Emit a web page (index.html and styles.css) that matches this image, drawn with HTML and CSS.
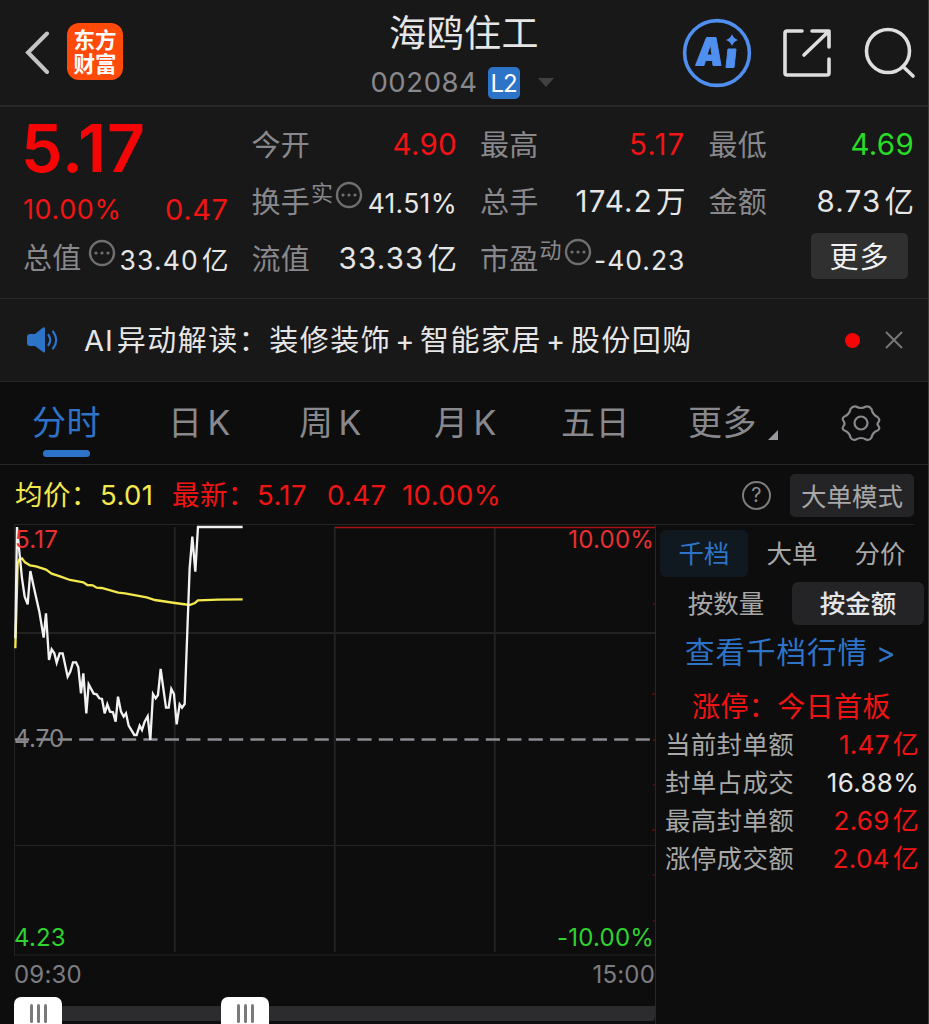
FILE: index.html
```
<!DOCTYPE html>
<html lang="zh-CN">
<head>
    <meta charset="UTF-8">
    <meta name="viewport" content="width=device-width, initial-scale=1.0">
    <title>海鸥住工 002084</title>
    <link rel="stylesheet" href="styles.css">
</head>
<body>
    <header class="header">
        <div class="header-left">
            <svg class="back" width="26" height="44" viewBox="0 0 26 44"><path d="M22 2.500 3 21.500 22 41"/></svg>
            <div class="logo"><span>东方</span><span>财富</span></div>
        </div>
        <div class="header-title">
            <h1>海鸥住工</h1>
            <div class="code"><span class="code-num">002084</span><span class="l2">L2</span><i class="caret"></i></div>
        </div>
        <div class="header-right">
            <svg width="70" height="70" viewBox="0 0 70 70">
                <circle cx="35" cy="35" r="32.4" fill="none" stroke="#4f8ff0" stroke-width="3.6"/>
                <path fill="#4f8ff0" stroke="#4f8ff0" stroke-linejoin="round" fill-rule="evenodd" d="M24.500 19.500H34L39 47.500H31L30.500 42.500H23.500L22 47.500H13.500ZM28.500 26.500 25 37H30Z"/>
                <path fill="#4f8ff0" stroke="#4f8ff0" stroke-linejoin="round" d="M46 31H54L52 49.500H44Z"/>
                <path fill="#4f8ff0" d="M50 16Q51.500 20.500 56 22Q51.500 23.500 50 28Q48.500 23.500 44 22Q48.500 20.500 50 16Z"/>
            </svg>
            <svg class="line-icon share" width="50" height="50" viewBox="0 0 50 50"><path d="M20 3H5Q3 3 3 5V45Q3 47 5 47H45Q47 47 47 45V31M30 3H47V19M46 4 22 27"/></svg>
            <svg class="line-icon" width="52" height="52" viewBox="0 0 52 52"><circle cx="24" cy="24" r="21.500"/><path d="M39 39.500 49 49"/></svg>
        </div>
    </header>

    <section class="quote">
        <div class="col">
            <div class="price">5.17</div>
            <div class="row change red"><span>10.00%</span><span class="diff">0.47</span></div>
            <div class="row last"><span class="label">总值</span><svg class="dots dots-gap" width="28" height="28" viewBox="0 0 28 28"><circle cx="14" cy="14" r="12"/><path d="M8 14h.01M14 14h.01M20 14h.01"/></svg><span class="val small wide">33.40<b>亿</b></span></div>
        </div>
        <div class="col">
            <div class="row"><span class="label">今开</span><span class="val red">4.90</span></div>
            <div class="row"><span class="label">换手</span><sup>实</sup><svg class="dots" width="28" height="28" viewBox="0 0 28 28"><circle cx="14" cy="14" r="12"/><path d="M8 14h.01M14 14h.01M20 14h.01"/></svg><span class="val small">41.51%</span></div>
            <div class="row"><span class="label">流值</span><span class="val wide">33.33<b>亿</b></span></div>
        </div>
        <div class="col">
            <div class="row"><span class="label">最高</span><span class="val wide red">5.17</span></div>
            <div class="row"><span class="label">总手</span><span class="val wide">174.2<b>万</b></span></div>
            <div class="row"><span class="label">市盈</span><sup>动</sup><svg class="dots" width="28" height="28" viewBox="0 0 28 28"><circle cx="14" cy="14" r="12"/><path d="M8 14h.01M14 14h.01M20 14h.01"/></svg><span class="val small pe">-40.23</span></div>
        </div>
        <div class="col">
            <div class="row"><span class="label">最低</span><span class="val green">4.69</span></div>
            <div class="row"><span class="label">金额</span><span class="val wide">8.73<b>亿</b></span></div>
            <button class="more">更多</button>
        </div>
    </section>

    <section class="news">
        <svg width="32" height="28" viewBox="0 0 32 28">
            <path fill="#2d74c8" d="M3 8H8L16 1.500Q18 .5 18 3V25Q18 27.500 16 26L8 20H3Q0 20 0 17V11Q0 8 3 8Z"/>
            <path fill="none" stroke="#2d74c8" stroke-width="2.200" stroke-linecap="round" d="M21.500 9Q25 14 21.500 19M26 5.500Q32.500 14 26 22.500"/>
        </svg>
        <p>AI<span class="news-body">异动解读：装修装饰<i>+</i>智能家居<i>+</i>股份回购</span></p>
        <span class="news-dot"></span>
        <svg class="close" width="20" height="20" viewBox="0 0 20 20"><path d="M2 2 18 18M18 2 2 18"/></svg>
    </section>

    <nav class="tabs">
        <a class="active">分时</a>
        <a>日<span>K</span></a>
        <a>周<span>K</span></a>
        <a>月<span>K</span></a>
        <a>五日</a>
        <a>更多<i class="corner"></i></a>
        <svg width="40" height="38" viewBox="0 0 40 38">
            <path d="M15 2.500Q20 5.500 25 2.500Q28.500 2 30.500 5Q31.500 10.500 36.500 13Q39.500 15.500 37.500 18Q35.500 20 37.500 22Q39.500 25 36.500 26.500Q31.500 28.500 30.500 33.500Q28.500 37 25 35.500Q20 32.500 15 35.500Q11.500 37 9.500 33.500Q8.500 28.500 3.500 26.500Q.5 25 2.500 22Q4.500 20 2.500 17Q.5 14 3.500 12.500Q8.500 10.500 9.500 5Q11.500 2 15 2.500Z"/>
            <circle cx="20" cy="19" r="6.500"/>
        </svg>
    </nav>

    <div class="info">
        <span class="yellow info-name">均价：</span><span class="yellow info-avg">5.01</span>
        <span class="red info-name">最新：</span><span class="red info-num">5.17</span><span class="red info-diff">0.47</span><span class="red">10.00%</span>
        <span class="help">?</span>
        <button class="mode">大单模式</button>
    </div>

    <main class="main">
        <div class="chart">
            <svg class="plot" width="642" height="432" viewBox="14 524 642 432">
                <g class="grid">
                    <path d="M14.500 524V956M14 955H655M15 845.500H655"/>
                    <path stroke-width="2" d="M174.800 527V952M334.800 527V952M494.800 527V952M15 633H655"/>
                </g>
                <path stroke="#a81414" stroke-width="1.500" d="M335 527.500H655"/>
                <path stroke="#7a1515" d="M653 604h2M652 694h3M653 740h2M653 785h2M652 830h3M653 875h2M653 921h2"/>
                <path class="prev-close" d="M15 739.500H655"/>
                <g class="lines" transform="translate(0 515) scale(.3333)">
                    <polyline stroke="#f3e84e" points="46,400 53,145 58,133 66,130 75,142 90,151 108,154 138,164 155,176 180,184 210,195 250,202 262,210 278,211 290,218 305,219 355,233 375,235 440,247 465,255 525,264 569,270 585,264 594,256 655,254 728,253"/>
                    <polyline stroke="#f2f2f2" points="46,370 51,36 58,110 66,190 74,245 83,268 91,168 104,228 118,290 131,368 138,295 147,435 155,403 163,415 170,443 179,415 188,415 203,485 211,470 219,442 228,442 235,457 243,535 250,475 259,595 266,508 281,536 290,538 298,550 306,552 314,595 322,568 330,590 339,592 347,620 354,545 363,590 371,605 378,595 386,632 403,660 410,660 419,632 426,645 434,620 443,604 451,675 459,537 467,550 474,540 482,462 498,578 506,578 514,522 522,537 530,628 539,568 546,578 554,567 562,350 569,160 577,65 586,170 594,36 728,36"/>
                </g>
                <g class="axis">
                    <text x="15" y="548" fill="#e83030">5.17</text>
                    <text x="654" y="548" fill="#e83030" text-anchor="end">10.00%</text>
                    <text x="14" y="747" fill="#86868b">4.70</text>
                    <text x="14" y="946" fill="#2fd22f">4.23</text>
                    <text x="654" y="946" fill="#2fd22f" text-anchor="end">-10.00%</text>
                </g>
            </svg>
            <div class="times"><span>09:30</span><span>15:00</span></div>
            <div class="slider">
                <span class="handle"><i></i><i></i><i></i></span>
                <span class="handle"><i></i><i></i><i></i></span>
            </div>
        </div>
        <aside class="side">
            <div class="side-tabs"><a class="on">千档</a><a>大单</a><a>分价</a></div>
            <div class="side-mode"><a>按数量</a><a class="on">按金额</a></div>
            <a class="side-link">查看千档行情<span>&gt;</span></a>
            <p class="side-title">涨停：今日首板</p>
            <dl>
                <div><dt>当前封单额</dt><dd class="red">1.47<b>亿</b></dd></div>
                <div><dt>封单占成交</dt><dd>16.88%</dd></div>
                <div><dt>最高封单额</dt><dd class="red">2.69<b>亿</b></dd></div>
                <div><dt>涨停成交额</dt><dd class="red">2.04<b>亿</b></dd></div>
            </dl>
        </aside>
    </main>
</body>
</html>
```
FILE: styles.css
```
* {
    box-sizing: border-box;
}
body {
    margin: 0;
    height: 1024px;
    overflow: hidden;
    background: #0d0d0d;
    border-right: 1px solid #3c3c3c;
    color: #e6e6e6;
    font-family: Inter, "Noto Sans CJK SC", sans-serif;
    font-weight: 400;
    line-height: 1.2;
    display: flex;
    flex-direction: column;
}
h1, p, dl, dd {
    margin: 0;
}
i, b {
    font-style: normal;
    font-weight: inherit;
}
button {
    border: 0;
    padding: 0;
    font-family: inherit;
}
.red { color: #f01414; }
.green { color: #26dc26; }
.yellow { color: #f3e84e; }

/* header */
.header {
    height: 107px;
    flex: none;
    display: grid;
    grid-template-columns: 1fr auto 1fr;
    background: #181818;
    border-bottom: 2px solid #282828;
}
.header-left {
    display: flex;
    align-items: center;
    padding-left: 25px;
}
.back {
    fill: none;
    stroke: #c4c4c4;
    stroke-width: 4;
    stroke-linecap: round;
}
.logo {
    width: 56px;
    height: 57px;
    margin-left: 16px;
    margin-top: -2px;
    border-radius: 12px;
    background: #ff4a0a;
    color: #fff;
    font-size: 21.500px;
    font-weight: 700;
    line-height: 24px;
    display: flex;
    flex-direction: column;
    align-items: center;
    justify-content: center;
}
.header-title {
    display: flex;
    flex-direction: column;
    align-items: center;
}
.header-title h1 {
    font-size: 37px;
    font-weight: 400;
    line-height: 42px;
    margin-top: 13px;
    letter-spacing: 0.5px;
}
.code {
    height: 33px;
    margin: 11px 4px 0 0;
    display: flex;
    align-items: center;
    color: #88888d;
    font-size: 27.500px;
}
.code-num {
    letter-spacing: 0.6px;
}
.l2 {
    width: 32px;
    height: 32px;
    margin-left: 10px;
    border-radius: 5px;
    background: #2d74c8;
    color: #fff;
    font-size: 24px;
    line-height: 34px;
    text-align: center;
    letter-spacing: -1px;
}
.caret {
    margin-left: 18px;
    border: 8px solid transparent;
    border-top: 9px solid #414144;
    border-bottom: 0;
}
.header-right {
    display: flex;
    align-items: center;
    justify-content: flex-end;
    padding-right: 12px;
}
.line-icon {
    fill: none;
    stroke: #dedede;
    stroke-width: 3.6;
    stroke-linecap: round;
    stroke-linejoin: round;
}
.share {
    margin: 0 32px 0 30px;
}

/* quote numbers */
.quote {
    height: 192px;
    flex: none;
    padding: 9px 14px 0 23px;
    display: grid;
    grid-template-columns: repeat(4, 1fr);
    column-gap: 23px;
    background: #181818;
    border-bottom: 1px solid #282828;
}
.row {
    height: 57px;
    padding-top: 1px;
    display: flex;
    align-items: center;
    white-space: nowrap;
}
.price {
    height: 64px;
    margin-left: -2px;
    font-size: 66px;
    font-weight: 600;
    line-height: 64px;
    color: #f50505;
    letter-spacing: 1px;
}
.change {
    height: 58px;
    padding-top: 2px;
    justify-content: space-between;
    font-size: 27px;
    letter-spacing: 0.6px;
}
.diff {
    font-size: 29px;
}
.last {
    height: 40px;
}
.label {
    padding-top: 2px;
    color: #88888d;
    font-size: 29px;
    letter-spacing: 0.3px;
}
sup {
    align-self: flex-start;
    margin: 6px 0 0 1px;
    color: #88888d;
    font-size: 22px;
    line-height: 26px;
}
.dots {
    align-self: flex-start;
    margin: 7px 0 0 2px;
    fill: none;
    stroke: #707070;
    stroke-width: 2.4;
    stroke-linecap: round;
}
.dots path {
    stroke-width: 3.2;
}
.dots-gap {
    margin: 0 0 0 6px;
}
.val {
    margin-left: auto;
    font-size: 29.500px;
    letter-spacing: 0.3px;
}
.wide {
    letter-spacing: 1.200px;
}
.val b {
    margin-left: 3px;
    letter-spacing: 0;
}
.small {
    font-size: 26.500px;
    padding-top: 4px;
}
.pe {
    letter-spacing: 1px;
}
.more {
    width: 97px;
    height: 46px;
    margin: 3px 6px 0 auto;
    display: block;
    border-radius: 5px;
    background: #303030;
    color: #f2f2f2;
    font-size: 29px;
    line-height: 49px;
    letter-spacing: 1px;
}

/* news bar */
.news {
    height: 83px;
    flex: none;
    padding: 0 24px 0 27px;
    display: flex;
    align-items: center;
    background: #181818;
    border-bottom: 1px solid #282828;
}
.news p {
    margin-left: 25px;
    padding-top: 2px;
    font-size: 29px;
    letter-spacing: 1px;
    white-space: nowrap;
}
.news-body {
    margin-left: 3px;
    letter-spacing: 1.500px;
}
.news-body i {
    margin: 0 4px;
}
.news-dot {
    width: 15px;
    height: 15px;
    margin-left: auto;
    border-radius: 50%;
    background: #f50505;
}
.close {
    margin-left: 24px;
    fill: none;
    stroke: #77777a;
    stroke-width: 2;
}

/* period tabs */
.tabs {
    height: 83px;
    flex: none;
    padding-left: 32px;
    display: grid;
    grid-template-columns: 136px 131px 135px 127px 127px 153px 40px;
    border-bottom: 1px solid #282828;
}
.tabs a {
    position: relative;
    color: #88888d;
    font-size: 34px;
    line-height: 82px;
    letter-spacing: 0.5px;
}
.tabs a span {
    margin-left: 5px;
    font-size: 34px;
}
.tabs .active {
    color: #2d74c8;
}
.tabs .active::after {
    content: "";
    position: absolute;
    left: 11px;
    bottom: 7px;
    width: 47px;
    height: 7px;
    border-radius: 4px;
    background: #2d74c8;
}
.corner {
    display: inline-block;
    margin-left: 11px;
    border-left: 10px solid transparent;
    border-bottom: 10px solid #9a9a9e;
    vertical-align: -5px;
}
.tabs svg {
    align-self: center;
    fill: none;
    stroke: #88888d;
    stroke-width: 2.2;
}

/* price line above the chart */
.info {
    height: 59px;
    flex: none;
    padding: 1px 14px 0 15px;
    display: flex;
    align-items: center;
    font-size: 27.500px;
    letter-spacing: 0.4px;
    white-space: nowrap;
}
.info-name {
    width: 85px;
}
.info-avg {
    width: 72px;
}
.info-num {
    width: 70px;
}
.info-diff {
    width: 75px;
}
.help {
    width: 29px;
    height: 29px;
    margin-left: auto;
    border: 2px solid #7c7c7c;
    border-radius: 50%;
    color: #8c8c8c;
    font-size: 20px;
    line-height: 25px;
    text-align: center;
}
.mode {
    width: 124px;
    height: 43px;
    margin-left: 19px;
    padding-bottom: 2px;
    border-radius: 5px;
    background: #242426;
    color: #a8a8a8;
    font-size: 25.500px;
}

/* chart and side panel */
.main {
    flex: 1;
    display: flex;
    position: relative;
}
.main::before {
    content: "";
    position: absolute;
    left: 14px;
    right: 14px;
    top: 0;
    height: 1px;
    background: #242424;
}
.chart {
    width: 656px;
    flex: none;
    padding-left: 14px;
    border-right: 1px solid #282828;
}
.plot {
    display: block;
    fill: none;
}
.grid {
    stroke: #222;
}
.prev-close {
    stroke: #8c8c92;
    stroke-width: 2.4;
    stroke-dasharray: 14.200 7.200;
}
.lines {
    stroke-width: 7;
    stroke-linejoin: miter;
}
.axis {
    font-size: 24px;
    letter-spacing: 0.2px;
}
.times {
    height: 41px;
    padding-top: 1px;
    display: flex;
    justify-content: space-between;
    color: #7c7c81;
    font-size: 24px;
    line-height: 36px;
    letter-spacing: 0.2px;
}
.slider {
    height: 27px;
    display: flex;
    gap: 159px;
    background: linear-gradient(#2c2c2e, #2c2c2e) 0 9px / 100% 15px no-repeat;
    border-bottom-right-radius: 8px;
}
.handle {
    width: 48px;
    height: 34px;
    padding-top: 7px;
    display: flex;
    justify-content: center;
    gap: 4px;
    border-radius: 7px;
    background: #fff;
}
.handle i {
    width: 3px;
    height: 19px;
    border-radius: 2px;
    background: #7a7a7a;
}
.side {
    flex: 1;
    padding: 6px 5px 0 4px;
    color: #a8a8a8;
    font-size: 25.500px;
}
.side-tabs {
    display: flex;
    line-height: 47px;
    text-align: center;
}
.side-tabs a {
    width: 88px;
}
.side-tabs .on {
    border-radius: 6px;
    background: #101820;
    color: #2d74c8;
}
.side-mode {
    margin-top: 5px;
    display: flex;
    line-height: 43px;
    text-align: center;
}
.side-mode a {
    width: 132px;
}
.side-mode .on {
    border-radius: 6px;
    background: #242426;
    color: #e6e6e6;
    font-weight: 500;
}
.side-link {
    display: block;
    margin: 6px 0 0 25px;
    color: #2d74c8;
    font-size: 29.500px;
    line-height: 42px;
    letter-spacing: 1px;
    white-space: nowrap;
}
.side-link span {
    margin-left: 8px;
}
.side-title {
    margin: 15px 0 0 32px;
    color: #f01414;
    font-size: 28px;
    line-height: 38px;
    letter-spacing: 0.4px;
}
.side dl div {
    height: 38px;
    padding: 0 5px;
    display: flex;
    align-items: center;
    justify-content: space-between;
}
.side dt {
    letter-spacing: 0.3px;
}
.side dd {
    font-size: 26px;
    letter-spacing: 0.3px;
}
.side dd:not(.red) {
    color: #e6e6e6;
}
.side dd b {
    margin-left: 3px;
}
```
